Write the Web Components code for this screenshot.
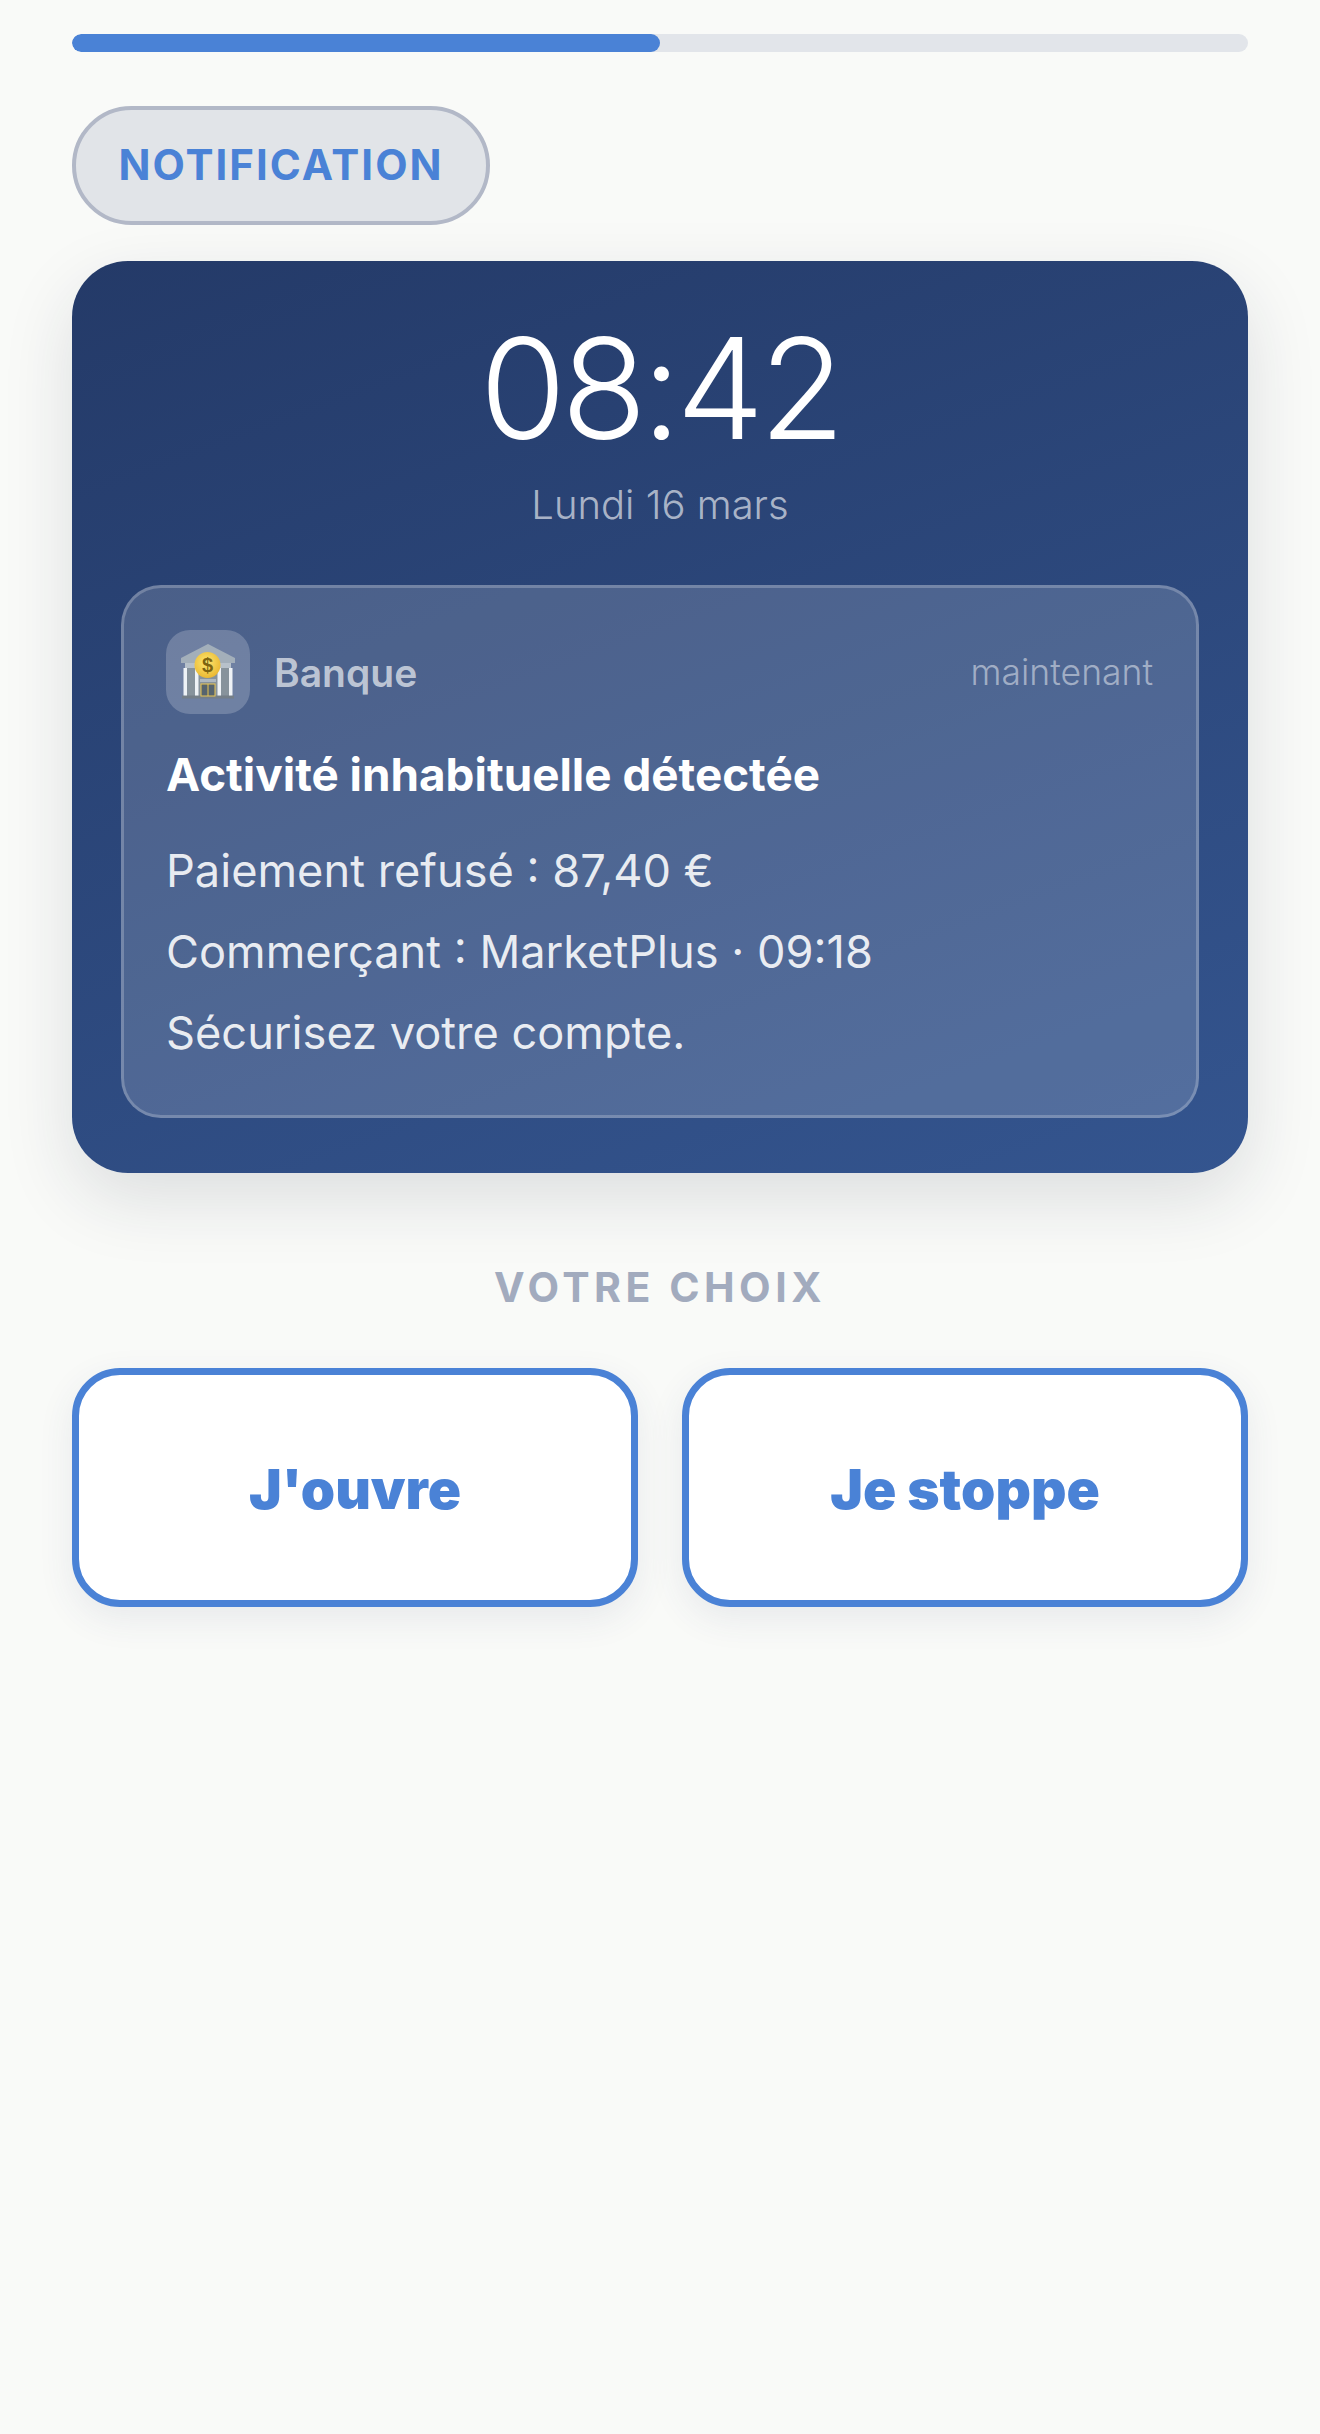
<!doctype html>
<html lang="fr">
<head>
<meta charset="utf-8">
<title>Notification</title>
<style>
  html, body { margin: 0; background: #f9faf8; }
  body { font-family: "Inter", "Noto Sans", sans-serif; }
</style>
</head>
<body>
<quiz-screen>
  <progress-bar value="50"></progress-bar>
  <step-pill>NOTIFICATION</step-pill>
  <lock-card time="08:42" date="Lundi 16 mars">
    <bank-notification app="Banque" when="maintenant" title="Activité inhabituelle détectée">
      <div>Paiement refusé : 87,40 €</div>
      <div>Commerçant : MarketPlus · 09:18</div>
      <div>Sécurisez votre compte.</div>
    </bank-notification>
  </lock-card>
  <choice-group label="VOTRE CHOIX">
    <choice-button>J'ouvre</choice-button>
    <choice-button>Je stoppe</choice-button>
  </choice-group>
</quiz-screen>

<script>
class QuizScreen extends HTMLElement {
  constructor() {
    super();
    this.attachShadow({ mode: 'open' });
    this.shadowRoot.innerHTML = `
      <style>
        :host {
          display: flex;
          flex-direction: column;
          align-items: stretch;
          box-sizing: border-box;
          min-height: 2434px;
          padding: 34px 72px 0;
          background: #f9faf8;
        }
      </style>
      <slot></slot>
    `;
  }
}

class ProgressBar extends HTMLElement {
  constructor() {
    super();
    this.attachShadow({ mode: 'open' });
    this.shadowRoot.innerHTML = `
      <style>
        :host {
          display: block;
          height: 18px;
          border-radius: 9px;
          background: #e2e5ea;
          overflow: hidden;
        }
        #fill {
          height: 100%;
          border-radius: 9px;
          background: #4a82d6;
        }
      </style>
      <div id="fill"></div>
    `;
  }

  connectedCallback() {
    this.shadowRoot.getElementById('fill').style.width = this.getAttribute('value') + '%';
  }
}

class StepPill extends HTMLElement {
  constructor() {
    super();
    this.attachShadow({ mode: 'open' });
    this.shadowRoot.innerHTML = `
      <style>
        :host {
          display: flex;
          align-items: center;
          justify-content: center;
          box-sizing: border-box;
          align-self: flex-start;
          width: 418px;
          height: 119px;
          margin-top: 54px;
          padding-bottom: 2px;
          border: 4px solid #b2b8c7;
          border-radius: 60px;
          background: #e1e4e8;
          color: #4a82d6;
          font-size: 42px;
          font-weight: 700;
          letter-spacing: 2px;
        }
      </style>
      <slot></slot>
    `;
  }
}

class LockCard extends HTMLElement {
  constructor() {
    super();
    this.attachShadow({ mode: 'open' });
    this.shadowRoot.innerHTML = `
      <style>
        :host {
          display: flex;
          flex-direction: column;
          align-items: stretch;
          box-sizing: border-box;
          height: 912px;
          margin-top: 36px;
          padding: 0 49px;
          border-radius: 56px;
          background: linear-gradient(160deg, #243a68 0%, #34558f 100%);
          box-shadow: 0 26px 70px rgba(30, 40, 60, 0.13);
          color: #fff;
          text-align: center;
        }
        #time {
          margin-top: 47px;
          font-size: 140px;
          line-height: 160px;
          font-weight: 285;
          letter-spacing: -5px;
        }
        #date {
          margin: 9px 0 52px;
          font-size: 40px;
          line-height: 56px;
          font-weight: 300;
          color: rgba(255, 255, 255, 0.62);
        }
      </style>
      <div id="time"></div>
      <div id="date"></div>
      <slot></slot>
    `;
  }

  connectedCallback() {
    this.shadowRoot.getElementById('time').textContent = this.getAttribute('time');
    this.shadowRoot.getElementById('date').textContent = this.getAttribute('date');
  }
}

class BankNotification extends HTMLElement {
  constructor() {
    super();
    this.attachShadow({ mode: 'open' });
    this.shadowRoot.innerHTML = `
      <style>
        :host {
          display: block;
          box-sizing: border-box;
          height: 533px;
          padding: 42px 43px 0 42px;
          border: 3px solid rgba(255, 255, 255, 0.22);
          border-radius: 40px;
          background: rgba(255, 255, 255, 0.16);
          text-align: left;
        }
        #head {
          display: flex;
          align-items: center;
          gap: 24px;
        }
        #icon {
          flex: none;
          display: flex;
          align-items: center;
          justify-content: center;
          width: 84px;
          height: 84px;
          border-radius: 24px;
          background: rgba(255, 255, 255, 0.2);
        }
        #app {
          font-size: 39px;
          font-weight: 600;
          color: rgba(255, 255, 255, 0.65);
        }
        #when {
          margin-left: auto;
          font-size: 35.5px;
          font-weight: 300;
          color: rgba(255, 255, 255, 0.48);
        }
        #title {
          margin-top: 31px;
          font-size: 45.8px;
          line-height: 60px;
          font-weight: 700;
          color: #fff;
        }
        #body {
          margin-top: 25px;
          font-size: 45.2px;
          line-height: 81px;
          font-weight: 400;
          color: rgba(255, 255, 255, 0.88);
        }
      </style>
      <div id="head">
        <div id="icon">
          <svg width="56" height="56" viewBox="0 0 56 56">
            <defs>
              <radialGradient id="coin" cx="0.45" cy="0.4" r="0.65">
                <stop offset="0" stop-color="#fde872"/>
                <stop offset="1" stop-color="#e9b52e"/>
              </radialGradient>
            </defs>
            <path d="M28 0 L55 14 V19 H1 V14 Z" fill="#a3afba"/>
            <path d="M5 19 H51 V24 H5 Z" fill="#b7c1ca"/>
            <path d="M5 24 H51 V52 H5 Z" fill="#87939c"/>
            <rect x="2" y="51.5" width="52" height="3" fill="#757f88"/>
            <rect x="3.5" y="24" width="3.5" height="27.5" fill="#eef2f6"/>
            <rect x="15" y="24" width="3.5" height="27.5" fill="#eef2f6"/>
            <rect x="37.5" y="24" width="3.5" height="27.5" fill="#eef2f6"/>
            <rect x="49" y="24" width="3.5" height="27.5" fill="#eef2f6"/>
            <rect x="20" y="35" width="16" height="3" fill="#aeb8c1"/>
            <rect x="21" y="40" width="14" height="12" fill="#56646e" stroke="#e9c552" stroke-width="1"/>
            <path d="M28 40 V52" stroke="#e9c552" stroke-width="1"/>
            <circle cx="27.5" cy="21" r="13" fill="url(#coin)"/>
            <text x="27.5" y="28" text-anchor="middle" font-family="Liberation Sans, sans-serif" font-size="20" font-weight="700" fill="#7d6410">$</text>
          </svg>
        </div>
        <span id="app"></span>
        <span id="when"></span>
      </div>
      <div id="title"></div>
      <div id="body"><slot></slot></div>
    `;
  }

  connectedCallback() {
    this.shadowRoot.getElementById('app').textContent = this.getAttribute('app');
    this.shadowRoot.getElementById('when').textContent = this.getAttribute('when');
    this.shadowRoot.getElementById('title').textContent = this.getAttribute('title');
  }
}

class ChoiceGroup extends HTMLElement {
  constructor() {
    super();
    this.attachShadow({ mode: 'open' });
    this.shadowRoot.innerHTML = `
      <style>
        :host {
          display: block;
          margin-top: 90px;
        }
        #label {
          height: 48px;
          line-height: 48px;
          text-align: center;
          font-size: 41px;
          font-weight: 700;
          letter-spacing: 4.5px;
          color: #a2abbe;
        }
        #row {
          display: grid;
          grid-template-columns: 1fr 1fr;
          gap: 44px;
          margin-top: 57px;
        }
      </style>
      <div id="label"></div>
      <div id="row"><slot></slot></div>
    `;
  }

  connectedCallback() {
    this.shadowRoot.getElementById('label').textContent = this.getAttribute('label');
  }
}

class ChoiceButton extends HTMLElement {
  constructor() {
    super();
    this.attachShadow({ mode: 'open' });
    this.shadowRoot.innerHTML = `
      <style>
        :host {
          display: flex;
          align-items: center;
          justify-content: center;
          box-sizing: border-box;
          height: 239px;
          padding-top: 3px;
          border: 7px solid #4a82d6;
          border-radius: 48px;
          background: #fff;
          box-shadow: 0 12px 36px rgba(60, 70, 110, 0.09);
          color: #4a82d6;
          font-size: 55px;
          font-weight: 900;
          cursor: pointer;
        }
      </style>
      <slot></slot>
    `;
  }
}

customElements.define('quiz-screen', QuizScreen);
customElements.define('progress-bar', ProgressBar);
customElements.define('step-pill', StepPill);
customElements.define('lock-card', LockCard);
customElements.define('bank-notification', BankNotification);
customElements.define('choice-group', ChoiceGroup);
customElements.define('choice-button', ChoiceButton);
</script>
</body>
</html>
